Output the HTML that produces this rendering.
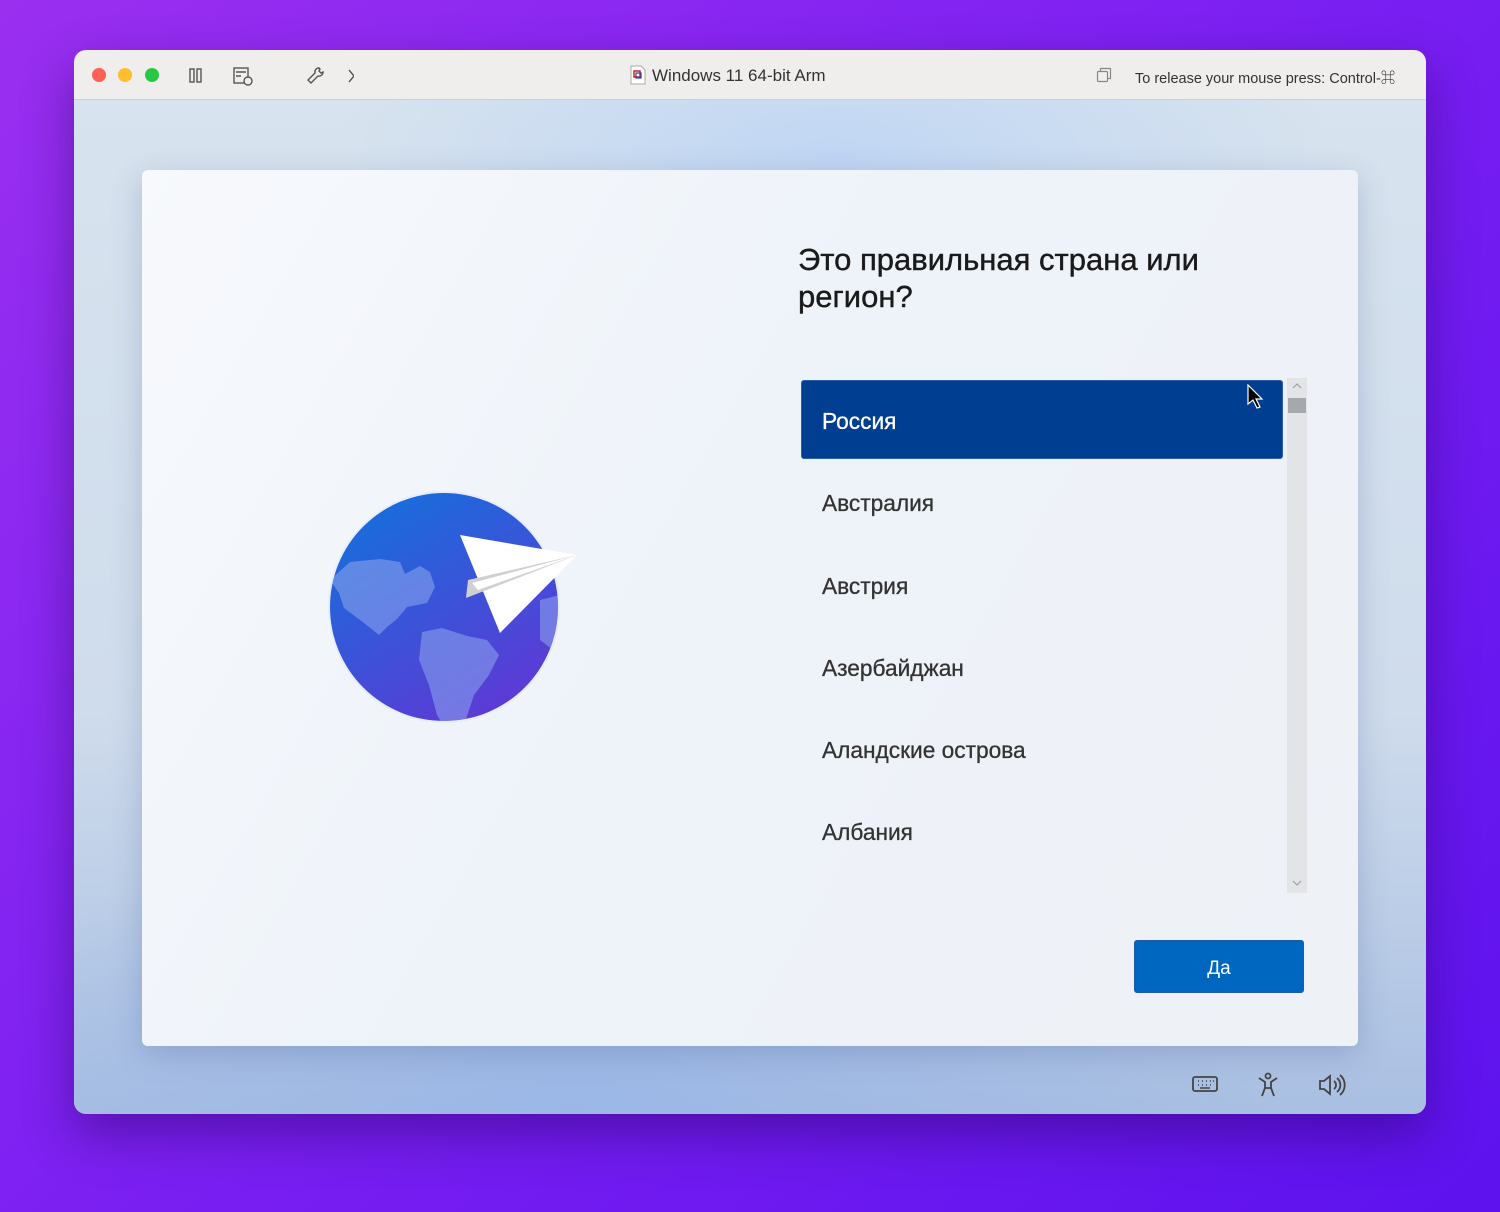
<!DOCTYPE html>
<html><head><meta charset="utf-8"><style>
*{margin:0;padding:0;box-sizing:border-box}
body{width:1500px;height:1212px;overflow:hidden;background:linear-gradient(135deg,#9a2ff0 0%,#7a1ff2 50%,#5d12ee 100%);font-family:"Liberation Sans","Noto Sans CJK SC",sans-serif;position:relative}
.win{position:absolute;left:74px;top:50px;width:1352px;height:1064px;border-radius:12px;overflow:hidden;box-shadow:0 20px 50px rgba(40,0,90,.45)}
.bar{position:absolute;left:0;top:0;width:100%;height:50px;background:#efeeed;border-bottom:1px solid #cfcfcf}
.dot{position:absolute;top:18px;width:14px;height:14px;border-radius:50%}
.vm{position:absolute;left:0;top:50px;width:100%;height:1014px;background:radial-gradient(ellipse 500px 200px at 760px 60px,#c0d6f4 0%,rgba(192,214,244,0) 100%),radial-gradient(ellipse 700px 300px at 500px 1020px,#9bb7e6 0%,rgba(155,183,230,0) 100%),linear-gradient(180deg,#d7e3ee 0%,#cfdcec 60%,#a9bfe2 100%)}
.card{position:absolute;left:68px;top:70px;width:1216px;height:876px;background:linear-gradient(120deg,#f7f9fc 0%,#eef3fa 45%,#eef1f6 100%);border-radius:6px;box-shadow:0 8px 30px rgba(60,80,140,.25)}
h1{position:absolute;left:656px;top:71px;font-size:31px;font-weight:normal;color:#1a1a1a;line-height:37px;width:460px;-webkit-text-stroke:0.4px #1a1a1a}
.item{position:absolute;left:680px;font-size:22.7px;color:#333;-webkit-text-stroke:0.3px #333}
.sel{position:absolute;left:659px;top:210px;width:482px;height:79px;background:#003e92;border:1px solid #2a5db0;border-radius:3px}
.sb{position:absolute;left:1145px;top:208px;width:20px;height:515px;background:#e2e4e8}
.btn{position:absolute;left:992px;top:770px;width:170px;height:53px;background:#0067c0;border-radius:3px;color:#fff;font-size:19px;text-align:center;line-height:56px;border:1px solid #1d5aa8}
</style></head><body>
<div class="win">
<div class="bar">
<div class="dot" style="left:18px;background:#fe5f57"></div>
<div class="dot" style="left:44px;background:#febc2e"></div>
<div class="dot" style="left:71px;background:#28c840"></div>
<svg style="position:absolute;left:110px;top:15px" width="170" height="22" fill="none" stroke="#555" stroke-width="1.4">
<rect x="6" y="4" width="4" height="13"/><rect x="13" y="4" width="4" height="13"/>
<rect x="50" y="3" width="14" height="15"/><path d="M52 7h10M52 11h5"/><circle cx="64" cy="16" r="4" fill="#efeeed"/>
<path d="M135 3a4 4 0 0 0-4 5l-7 7 3 3 7-7a4 4 0 0 0 5-4l-2 1-2-2 1-2z"/>
<path d="M165 5l5 6-5 6"/>
</svg>
<svg style="position:absolute;left:556px;top:15px" width="16" height="20"><path d="M1 1h10l4 4v14H1z" fill="#fff" stroke="#aaa"/><rect x="4" y="6" width="6" height="6" fill="none" stroke="#c22" stroke-width="1.5"/><rect x="6" y="8" width="5" height="5" fill="none" stroke="#24b" stroke-width="1.2"/></svg>
<div style="position:absolute;left:578px;top:16px;font-size:17px;color:#333">Windows 11 64-bit Arm</div>
<svg style="position:absolute;left:1022px;top:17px" width="16" height="16" fill="none" stroke="#888" stroke-width="1.2"><rect x="1.5" y="4.5" width="10" height="10" rx="1"/><path d="M4.5 4.5V1.5h10v10h-3"/></svg>
<div style="position:absolute;left:1061px;top:17px;font-size:14.5px;color:#333;white-space:nowrap">To release your mouse press: Control-⌘</div>
</div>
<div class="vm">
<div class="card">
<svg style="position:absolute;left:178px;top:310px" width="270" height="250" viewBox="320 480 270 250">
<defs><linearGradient id="g" x1="0" y1="0" x2="0.6" y2="1"><stop offset="0" stop-color="#0f74dc"/><stop offset="1" stop-color="#5b3bd6"/></linearGradient><clipPath id="c"><circle cx="444" cy="607" r="114"/></clipPath></defs>
<circle cx="444" cy="607" r="116" fill="#dfe8f8" opacity=".6"/>
<circle cx="444" cy="607" r="114" fill="url(#g)"/>
<g clip-path="url(#c)" fill="#8fa8ee" opacity=".55">
<path d="M330 580l20-18 30-3 20 3 5 12 15-8 10 6 5 15-8 16-20 4-10 12-10 8-8 8-15-12-20-15-5-15z"/>
<path d="M422 632l20-4 25 8 20 4 12 15-10 20-15 20-10 30-15 10-12-20-8-30-10-25z"/>
<path d="M540 600l20-5 20 10v40l-20 10-20-15z"/>
</g>
<path d="M460 535L577 555L500 633Z" fill="#fff"/>
<path d="M468 580L577 555L466 598Z" fill="#d0d0d0"/>
<path d="M472 583L577 555L478 590Z" fill="#fff"/>
</svg>
<h1>Это правильная страна или регион?</h1>
<div class="sel"></div>
<div class="item" style="top:238px;color:#fff;-webkit-text-stroke:0.3px #fff">Россия</div>
<svg style="position:absolute;left:1104px;top:214px" width="18" height="26"><path d="M2 1v19l5-4 4 8 3-1-4-8h6z" fill="#000" stroke="#fff" stroke-width="1.2"/></svg>
<div class="item" style="top:320px">Австралия</div>
<div class="item" style="top:403px">Австрия</div>
<div class="item" style="top:485px">Азербайджан</div>
<div class="item" style="top:567px">Аландские острова</div>
<div class="item" style="top:649px">Албания</div>
<div class="sb"><div style="position:absolute;left:1px;top:20px;width:18px;height:15px;background:#a5a8ad"></div>
<svg style="position:absolute;left:4px;top:3px" width="12" height="10" fill="none" stroke="#999"><path d="M2 7l4-4 4 4"/></svg>
<svg style="position:absolute;left:4px;top:500px" width="12" height="10" fill="none" stroke="#999"><path d="M2 3l4 4 4-4"/></svg></div>
<div class="btn">Да</div>
</div>
<svg style="position:absolute;left:1116px;top:972px" width="160" height="26" fill="none" stroke="#444" stroke-width="1.8">
<rect x="3" y="5" width="24" height="14" rx="2"/><path d="M8 9h1M12 9h1M16 9h1M20 9h1M24 9h-1M8 13h1M12 13h1M16 13h1M20 13h1M10 16h10" stroke-width="1.5"/>
<circle cx="78" cy="4" r="2.5"/><path d="M69 6l6 4v6l-3 8M87 6l-6 4v6l3 8M75 16h6"/>
<path d="M130 9h4l6-5v18l-6-5h-4z"/><path d="M144 9a5 5 0 0 1 0 8M147 6a9 9 0 0 1 0 14M150 3a13 13 0 0 1 0 20"/>
</svg>
</div>
</div>
</body></html>
